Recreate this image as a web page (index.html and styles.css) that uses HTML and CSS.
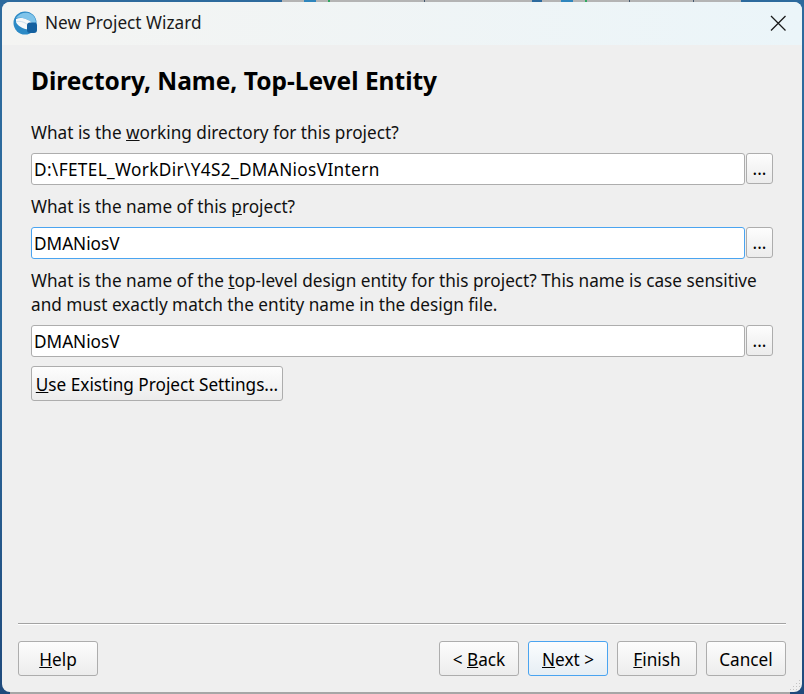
FILE: index.html
```html
<!DOCTYPE html>
<html lang="en">
<head>
    <meta charset="UTF-8">
    <meta name="viewport" content="width=device-width, initial-scale=1.0">
    <title>New Project Wizard</title>
    <link rel="stylesheet" href="styles.css">
</head>
<body>
    <div class="window">
        <div class="titlebar">
            <svg class="app-icon" width="25" height="24" viewBox="0 0 25 24">
                <circle cx="12" cy="12" r="11.500" fill="#2c8ac6"/>
                <path d="M3 7C6 2.500 11 1 15.500 2 19.500 3 22.500 6 23 11L20 13C17 9 10 6 3 7Z" fill="#7fc4ea"/>
                <path d="M3 8C9 5.500 16 8.500 20 13L15.500 18.500C10 18 4.500 15 3 11Z" fill="#f6f8f9"/>
                <path d="M3 11C6 9.500 11 10.500 15 14" stroke="#c9dfee" stroke-width="1" fill="none"/>
                <path d="M14 14.500C14 12.500 15 11.500 17 11.500H21C23 11.500 24 12.500 24 14.500V19C24 21 23 22 21 22H17C15 22 14 21 14 19Z" fill="#14609f"/>
            </svg>
            <span class="title">New Project Wizard</span>
            <svg class="close" width="16" height="16" viewBox="0 0 16 16">
                <path d="M1 1 15.500 15.500M15.500 1 1 15.500" stroke="#1a1a1a" stroke-width="1.300" fill="none"/>
            </svg>
        </div>
        <div class="content">
            <h1>Directory, Name, Top-Level Entity</h1>

            <p class="label">What is the <u>w</u>orking directory for this project?</p>
            <div class="field-row">
                <div class="field path">D:\FETEL_WorkDir\Y4S2_DMANiosVIntern</div>
                <button class="browse">...</button>
            </div>

            <p class="label">What is the name of this <u>p</u>roject?</p>
            <div class="field-row">
                <div class="field focused">DMANiosV</div>
                <button class="browse">...</button>
            </div>

            <p class="label">What is the name of the <u>t</u>op-level design entity for this project? This name is case sensitive<br>and must exactly match the entity name in the design file.</p>
            <div class="field-row">
                <div class="field">DMANiosV</div>
                <button class="browse">...</button>
            </div>

            <button class="btn existing"><u>U</u>se Existing Project Settings...</button>
        </div>
        <div class="footer">
            <div class="divider"></div>
            <div class="buttons">
                <button class="btn wide"><u>H</u>elp</button>
                <div class="nav">
                    <button class="btn wide">&lt; <u>B</u>ack</button>
                    <button class="btn wide default"><u>N</u>ext &gt;</button>
                    <button class="btn wide"><u>F</u>inish</button>
                    <button class="btn wide">Cancel</button>
                </div>
            </div>
        </div>
        <svg class="grip" width="14" height="14" viewBox="0 0 14 14">
            <g fill="#c4c4c4">
                <rect x="11" y="2" width="1" height="1"/>
                <rect x="8" y="5" width="1" height="1"/>
                <rect x="11" y="5" width="1" height="1"/>
                <rect x="5" y="8" width="1" height="1"/>
                <rect x="8" y="8" width="1" height="1"/>
                <rect x="11" y="8" width="1" height="1"/>
                <rect x="2" y="11" width="1" height="1"/>
                <rect x="5" y="11" width="1" height="1"/>
                <rect x="8" y="11" width="1" height="1"/>
            </g>
        </svg>
    </div>
</body>
</html>
```

FILE: styles.css
```css
html, body {
    margin: 0;
    height: 100%;
}
body {
    width: 804px;
    height: 694px;
    overflow: hidden;
    box-sizing: border-box;
    padding: 2px;
    /* what shows of the desktop behind the dialog: taskbar strip on top, shadow below */
    background:
        linear-gradient(to right, #2d6a9d 282px, #b4b4b4 282px 304px, #2f86bd 304px 316px, #b4b4b4 316px 328px,
            #2fa860 328px 330px, #b4b4b4 330px 424px, #44586e 424px 425px, #b4b4b4 425px 532px, #2d6a9d 532px 542px,
            #b4b4b4 542px 561px, #2f86bd 561px 573px, #b4b4b4 573px 585px, #2fa860 585px 587px, #b4b4b4 587px 629px,
            #44586e 629px 630px, #b4b4b4 630px 693px, #44586e 693px 694px, #b4b4b4 694px 741px, #2d6a9d 741px) top / 100% 2px no-repeat,
        linear-gradient(to right, #1f4a7c 10px, #a6a6a6 10px 790px, #1f4a7c 790px) bottom / 100% 2px no-repeat,
        linear-gradient(#2d6a9d 50%, #1f4a7c);
    font-family: "Noto Sans", "Open Sans", sans-serif;
    color: #000;
}
.window {
    position: relative;
    height: 100%;
    display: flex;
    flex-direction: column;
    background-color: #efefef;
    border-radius: 8px;
    overflow: hidden;
}
.titlebar {
    height: 43px;
    box-sizing: border-box;
    flex: none;
    display: flex;
    align-items: center;
    padding: 0 16px 2px 11px;
    background: linear-gradient(to right, #f4f4f2, #ebf5f9);
}
.app-icon {
    margin-right: 7px;
}
.title {
    flex: 1;
    font-size: 17.200px;
    color: #1a1a1a;
}
.content {
    flex: 1;
    padding: 0 29px;
}
h1 {
    margin: 20px 0 24px;
    font-size: 24.500px;
    line-height: 32px;
    font-weight: 700;
}
.label {
    margin: 0 0 8px;
    font-size: 17.200px;
    line-height: 24px;
    color: #111;
}
.field-row {
    display: flex;
    gap: 1px;
    margin-bottom: 10px;
}
.field {
    flex: 1;
    height: 32px;
    box-sizing: border-box;
    border: 1px solid #adadad;
    border-radius: 3px;
    background-color: #fff;
    padding-left: 2px;
    font-size: 17.200px;
    line-height: 31px;
}
.field.path {
    letter-spacing: .36px;
}
.field.focused {
    border-color: #4aa4f0;
}
button {
    font-family: inherit;
    color: #000;
    cursor: pointer;
}
.browse, .btn {
    box-sizing: border-box;
    border: 1px solid #adadad;
    border-radius: 3px;
    background: linear-gradient(#fdfdfd, #ececec);
    padding: 0;
    font-size: 17.200px;
}
.btn {
    padding-top: 2px;
}
.browse {
    width: 27px;
    height: 31px;
}
.existing {
    display: block;
    width: 252px;
    height: 35px;
    margin-top: -1px;
}
.footer {
    flex: none;
    padding: 0 16px 16px;
}
.divider {
    height: 1px;
    background-color: #a3a3a3;
    border-bottom: 1px solid #fff;
    margin-bottom: 16px;
}
.buttons {
    display: flex;
    justify-content: space-between;
}
.nav {
    display: flex;
    gap: 9px;
}
.wide {
    width: 80px;
    height: 35px;
}
.default {
    border-color: #4aa4f0;
    background: linear-gradient(#fbfdfe, #e6eef4);
}
.grip {
    position: absolute;
    right: 0;
    bottom: 0;
}
```
